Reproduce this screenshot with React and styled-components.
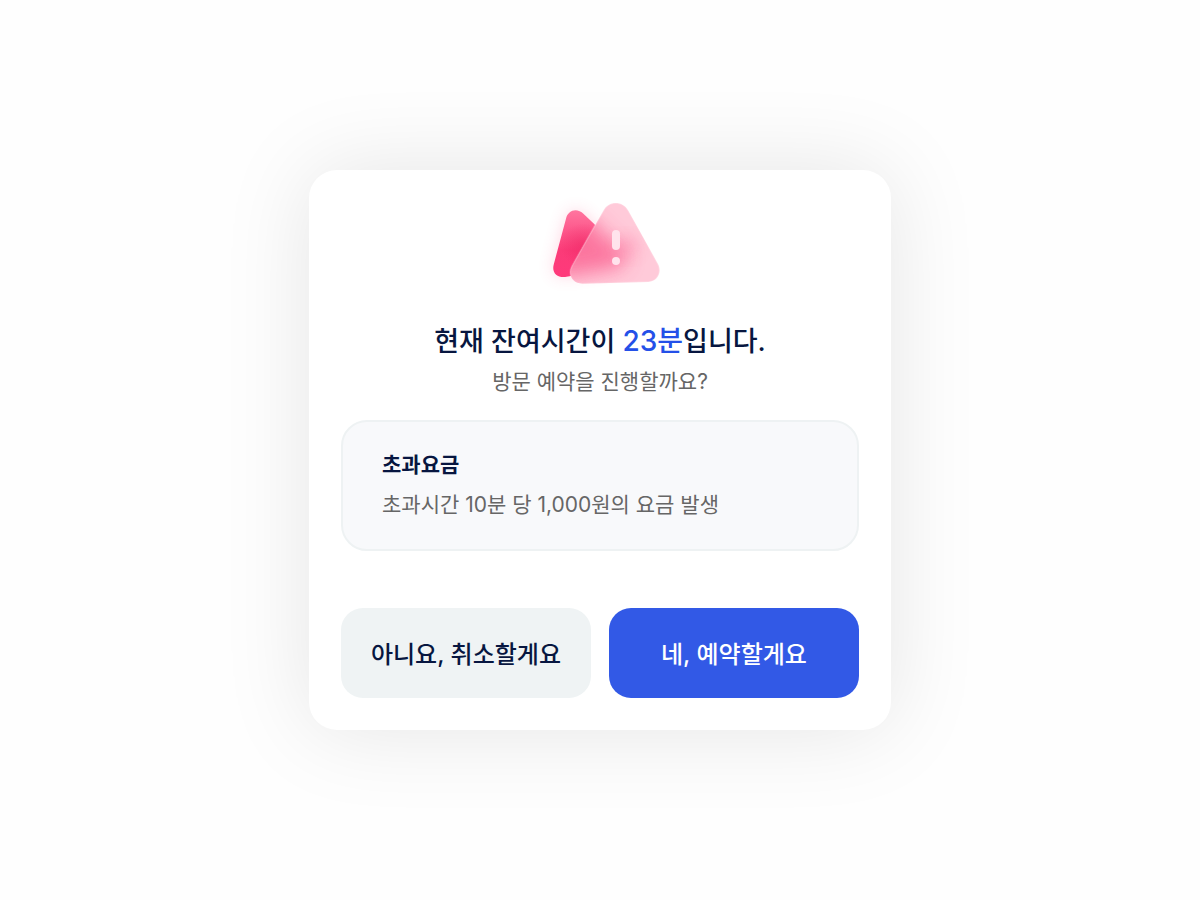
import React from "react";
import styled, { createGlobalStyle } from "styled-components";

const GlobalStyle = createGlobalStyle`
* {
    box-sizing: border-box;
}

body {
    margin: 0;
    background-color: #fefefe;
    font-family: Inter, "Noto Sans CJK KR", sans-serif;
}
`;

const Page = styled.main`
min-height: 100vh;
display: flex;
align-items: center;
justify-content: center;
padding: 24px;
`;

const Modal = styled.section`
width: 100%;
max-width: 582px;
display: flex;
flex-direction: column;
padding: 20px 32px 32px;
border-radius: 28px;
background-color: white;
box-shadow: 0 0 90px rgba(0, 0, 0, 0.1);
`;

const IconWrapper = styled.div`
display: flex;
justify-content: center;
margin-bottom: 21px;
padding-left: 10px;
`;

const Title = styled.h1`
margin: 0;
color: #071640;
font-size: 27px;
font-weight: 500;
line-height: 40px;
text-align: center;
`;

const Accent = styled.span`
color: #2450e8;
font-size: 28px;
`;

const Text = styled.p`
margin: 0;
color: #666666;
font-size: 21px;
font-weight: 400;
line-height: 40px;
text-align: ${(props) => props.$align || "left"};
`;

const FeeBox = styled.div`
margin: 18px 0 57px;
padding: 23px 39px 24px;
border: 2px solid #eef2f3;
border-radius: 26px;
background-color: #f8f9fb;
`;

const FeeTitle = styled.h2`
margin: 0;
color: #071640;
font-size: 21px;
font-weight: 700;
line-height: 40px;
`;

const ButtonRow = styled.div`
display: grid;
grid-template-columns: 1fr 1fr;
gap: 18px;
`;

const Button = styled.button`
height: 90px;
padding: 0 0 2px;
border: none;
border-radius: 22px;
background-color: ${(props) => (props.$primary ? "#3259e6" : "#eff3f4")};
color: ${(props) => (props.$primary ? "white" : "#071640")};
font-family: inherit;
font-size: 24px;
font-weight: 500;
cursor: pointer;
`;

const frontShape =
    "M205 62 C221 31 263 31 280 62 L369 222 C382 246 368 275 340 276 L142 281 C112 281 97 254 111 228 Z";
const backShape =
    "M93 86 C99 60 126 52 146 72 L262 182 C282 206 272 228 246 234 L90 261 C66 263 50 248 56 224 Z";

function WarningIcon() {
    return (
        <svg width="140" height="110" viewBox="0 0 420 330" aria-hidden="true">
            <defs>
                <linearGradient id="back" x1="0" y1="0" x2="0" y2="1">
                    <stop offset="0" stopColor="#ff759f" />
                    <stop offset="0.6" stopColor="#fb3b78" />
                    <stop offset="1" stopColor="#ff397b" />
                </linearGradient>
                <linearGradient id="edge" x1="0" y1="0" x2="1" y2="1">
                    <stop offset="0" stopColor="#ffffff" stopOpacity="0.35" />
                    <stop offset="0.6" stopColor="#ffffff" stopOpacity="0.1" />
                    <stop offset="1" stopColor="#ffffff" stopOpacity="0.3" />
                </linearGradient>
                <radialGradient id="core">
                    <stop offset="0" stopColor="#e91e5c" stopOpacity="0.4" />
                    <stop offset="1" stopColor="#e91e5c" stopOpacity="0" />
                </radialGradient>
                <filter id="glow" x="-50%" y="-50%" width="200%" height="200%">
                    <feGaussianBlur stdDeviation="24" />
                </filter>
                <filter id="haze" x="-50%" y="-50%" width="200%" height="200%">
                    <feGaussianBlur stdDeviation="30" />
                </filter>
                <clipPath id="front">
                    <path d={frontShape} />
                </clipPath>
                <clipPath id="behind">
                    <path d={backShape} />
                </clipPath>
            </defs>
            <path d={backShape} fill="#ff5c8d" opacity="0.24" filter="url(#glow)" />
            <path d={backShape} fill="url(#back)" />
            <ellipse cx="145" cy="165" rx="70" ry="65" fill="url(#core)" clipPath="url(#behind)" />
            <path d={frontShape} fill="#ffcad9" />
            <g clipPath="url(#front)">
                <path d={backShape} fill="#f93d78" opacity="0.6" filter="url(#haze)" />
                <ellipse cx="275" cy="170" rx="34" ry="30" fill="#f93d78" opacity="0.22" filter="url(#glow)" />
            </g>
            <path d={frontShape} fill="none" stroke="url(#edge)" strokeWidth="5" />
            <rect x="231" y="120" width="24" height="60" rx="12" fill="#ffe3ec" />
            <circle cx="243" cy="213" r="12" fill="#ffe3ec" />
        </svg>
    );
}

export default function App() {
    return (
        <>
            <GlobalStyle />
            <Page>
                <Modal role="dialog" aria-labelledby="modal-title">
                    <IconWrapper>
                        <WarningIcon />
                    </IconWrapper>
                    <Title id="modal-title">
                        현재 잔여시간이 <Accent>23분</Accent>입니다.
                    </Title>
                    <Text $align="center">방문 예약을 진행할까요?</Text>
                    <FeeBox>
                        <FeeTitle>초과요금</FeeTitle>
                        <Text>초과시간 10분 당 1,000원의 요금 발생</Text>
                    </FeeBox>
                    <ButtonRow>
                        <Button type="button">아니요, 취소할게요</Button>
                        <Button type="button" $primary>네, 예약할게요</Button>
                    </ButtonRow>
                </Modal>
            </Page>
        </>
    );
}
